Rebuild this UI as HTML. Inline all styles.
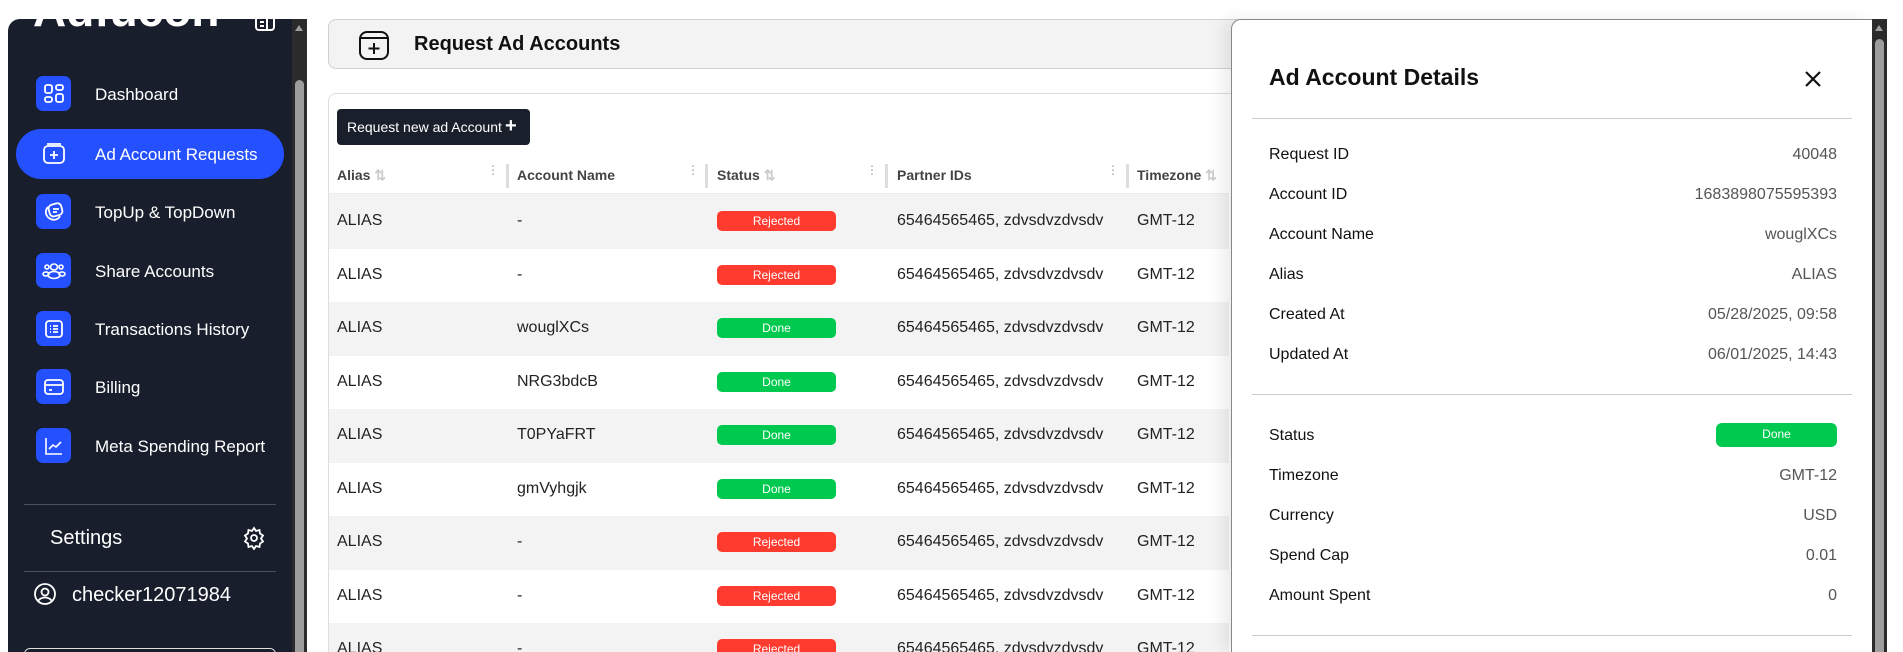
<!DOCTYPE html>
<html><head><meta charset="utf-8"><style>
*{box-sizing:border-box;margin:0;padding:0}
html,body{width:1903px;height:652px;overflow:hidden}
body{background:#fff;font-family:"Liberation Sans",Arial,sans-serif;position:relative}
.sb{position:absolute;left:8px;top:19px;width:284px;height:633px;background:#181e2c;border-radius:12px 0 0 0;overflow:hidden}
.sbs{position:absolute;left:292px;top:19px;width:15px;height:633px;background:#2b2b2b;overflow:hidden}
.sbs .th{position:absolute;left:3px;top:61px;width:9px;height:600px;background:#9d9d9d;border-radius:5px}
.sbs .ar{position:absolute;left:3px;top:6px;width:0;height:0;border-left:4.5px solid transparent;border-right:4.5px solid transparent;border-bottom:6px solid #9d9d9d}
.logo{position:absolute;left:25px;top:-36px;color:#fff;font-weight:900;font-size:46px;letter-spacing:0px}
.nav{position:absolute;left:0;width:284px;height:50px;color:#fff;font-size:17px}
.nav .ic{position:absolute;left:28px;top:7px;width:35px;height:35px;background:#2450ff;border-radius:7px;display:flex;align-items:center;justify-content:center}
.nav .t{position:absolute;left:87px;top:16px}
.nav.act{left:8px;width:268px;background:#2450ff;border-radius:25px}
.nav.act .ic{left:20px}.nav.act .t{left:79px}
.hr{position:absolute;left:16px;width:252px;height:1px;background:#4a505c}
.hdr{position:absolute;left:328px;top:19px;width:1000px;height:50px;background:#f3f3f3;border:1px solid #d0d0d0;border-radius:8px}
.hdr .t{position:absolute;left:85px;top:13px;font-size:20px;font-weight:bold;color:#111}
.card{position:absolute;left:328px;top:93px;width:1000px;height:570px;border:1px solid #ddd;border-radius:8px;background:#fff}
.btn{position:absolute;left:337px;top:109px;width:193px;height:36px;background:#1a1f2c;border-radius:4px;color:#fff;font-size:14px;padding:10px 0 0 10px}
.th2{position:absolute;top:167px;font-size:14px;font-weight:bold;color:#444}
.sep{position:absolute;top:164px;width:3px;height:24px;background:#ddd}
.dots{position:absolute;top:168px;width:3px;color:#999;font-size:12px;line-height:5px}
.row{position:absolute;left:329px;width:900px;height:53.5px;font-size:16px;color:#222}
.row.g{background:#f3f3f3}
.row span{position:absolute;top:17px}
.bd{position:absolute;top:16px;left:388px;width:119px;height:20px;border-radius:5px;color:#fff;font-size:12px;text-align:center;line-height:20px}
.rj{background:#ff3b30}.dn{background:#00c94f}
.hshadow{position:absolute;left:329px;top:193px;width:900px;height:3px;background:linear-gradient(#e8e8e8,#fff0)}
.dr{position:absolute;left:1231px;top:19px;width:641px;height:633px;background:#fff;border:1px solid #888;border-right:none;border-bottom:none;border-radius:10px 0 0 0;box-shadow:-8px 0 16px rgba(0,0,0,.08)}
.dr h2{position:absolute;left:37px;top:44px;font-size:23px;font-weight:bold;color:#111}
.dl{position:absolute;left:20px;width:600px;height:1px;background:#ccc}
.lb{position:absolute;left:37px;font-size:16px;color:#111}
.vl{position:absolute;right:35px;font-size:16px;color:#555;text-align:right}
.dsb{position:absolute;left:1872px;top:19px;width:15px;height:633px;background:#2b2b2b;overflow:hidden}
.dsb .th{position:absolute;left:3px;top:20px;width:9px;height:640px;background:#9d9d9d;border-radius:5px}
.dsb .ar{position:absolute;left:3px;top:6px;width:0;height:0;border-left:4.5px solid transparent;border-right:4.5px solid transparent;border-bottom:6px solid #9d9d9d}
</style></head><body>
<div class="sb">
 <div class="logo">Adfucon</div>
 <svg style="position:absolute;left:247px;top:-6px" width="20" height="20" viewBox="0 0 20 20" fill="none" stroke="#fff" stroke-width="2"><rect x="1" y="1" width="18" height="16" rx="3"/><path d="M12 1v16M5 9h4M5 13h4"/></svg>
 <div class="nav" style="top:50px"><div class="ic"><svg width="22" height="22" viewBox="0 0 22 22" fill="none" stroke="#fff" stroke-width="1.8"><rect x="2" y="2" width="7" height="8" rx="2"/><rect x="13" y="2" width="7" height="5" rx="2"/><rect x="2" y="14" width="7" height="5" rx="2"/><rect x="13" y="11" width="7" height="8" rx="2"/></svg></div><div class="t">Dashboard</div></div>
 <div class="nav act" style="top:110px"><div class="ic"><svg width="24" height="24" viewBox="0 0 24 24" fill="none" stroke="#fff" stroke-width="1.8"><rect x="2" y="4" width="20" height="17" rx="4"/><path d="M5 2h14M12 9v8M8 13h8"/></svg></div><div class="t">Ad Account Requests</div></div>
 <div class="nav" style="top:168px"><div class="ic"><svg width="22" height="22" viewBox="0 0 22 22" fill="none" stroke="#fff" stroke-width="1.8"><path d="M5 6c-3 3-3 8 1 11s9 2 11-2"/><rect x="6" y="3" width="13" height="12" rx="4" transform="rotate(-15 12 9)"/><path d="M10 8h6M10 11h4"/></svg></div><div class="t">TopUp &amp; TopDown</div></div>
 <div class="nav" style="top:227px"><div class="ic"><svg width="24" height="22" viewBox="0 0 24 22" fill="none" stroke="#fff" stroke-width="1.6"><ellipse cx="12" cy="7" rx="3.5" ry="3"/><ellipse cx="12" cy="15" rx="6" ry="3.5"/><circle cx="5" cy="7" r="2"/><circle cx="19" cy="7" r="2"/><ellipse cx="4" cy="14" rx="3" ry="2"/><ellipse cx="20" cy="14" rx="3" ry="2"/></svg></div><div class="t">Share Accounts</div></div>
 <div class="nav" style="top:285px"><div class="ic"><svg width="22" height="22" viewBox="0 0 22 22" fill="none" stroke="#fff" stroke-width="1.8"><rect x="3" y="3" width="16" height="16" rx="3"/><path d="M7 8h1M10 8h5M7 11h1M10 11h5M7 14h1M10 14h5"/></svg></div><div class="t">Transactions History</div></div>
 <div class="nav" style="top:343px"><div class="ic"><svg width="22" height="22" viewBox="0 0 22 22" fill="none" stroke="#fff" stroke-width="1.8"><rect x="2" y="4" width="18" height="14" rx="3"/><path d="M2 9h18M6 14h3"/></svg></div><div class="t">Billing</div></div>
 <div class="nav" style="top:402px"><div class="ic"><svg width="22" height="22" viewBox="0 0 22 22" fill="none" stroke="#fff" stroke-width="1.6"><path d="M3 3v16h16M6 14l4-4 3 2 5-5"/></svg></div><div class="t">Meta Spending Report</div></div>
 <div class="hr" style="top:485px"></div>
 <div style="position:absolute;left:42px;top:508px;color:#fff;font-size:20px">Settings</div>
 <svg style="position:absolute;left:234px;top:507px" width="24" height="24" viewBox="0 0 24 24" fill="none" stroke="#fff" stroke-width="1.8"><circle cx="12" cy="12" r="3"/><path d="M12 2l2 3 3.5-1 .5 3.5 3 2-2 3 2 3-3 2-.5 3.5-3.5-1-2 3-2-3-3.5 1-.5-3.5-3-2 2-3-2-3 3-2 .5-3.5 3.5 1z"/></svg>
 <div class="hr" style="top:552px"></div>
 <svg style="position:absolute;left:25px;top:563px" width="24" height="24" viewBox="0 0 24 24" fill="none" stroke="#fff" stroke-width="1.8"><circle cx="12" cy="12" r="10"/><circle cx="12" cy="10" r="3.5"/><path d="M5.5 18.5c3-4 10-4 13 0"/></svg>
 <div style="position:absolute;left:64px;top:565px;color:#fff;font-size:20px">checker12071984</div>
 <div style="position:absolute;left:16px;top:629px;width:252px;height:30px;border:1px solid #ddd;border-radius:6px"></div>
</div>
<div class="sbs"><div class="ar"></div><div class="th"></div></div>

<div class="hdr">
 <svg style="position:absolute;left:28px;top:9px" width="34" height="32" viewBox="0 0 34 32" fill="none" stroke="#111" stroke-width="2"><rect x="3" y="3" width="28" height="27" rx="7"/><path d="M4 9h26M17 14v11M11.5 19.5h11"/></svg>
 <div class="t">Request Ad Accounts</div>
</div>
<div class="card"></div>
<div class="btn">Request new ad Account <b style="font-size:20px;position:absolute;left:168px;top:6px">+</b></div>
<div class="th2" style="left:337px">Alias <span style="color:#ccc">⇅</span></div>
<div class="dots" style="left:487px">⋮</div><div class="sep" style="left:506px"></div>
<div class="th2" style="left:517px">Account Name</div>
<div class="dots" style="left:687px">⋮</div><div class="sep" style="left:705px"></div>
<div class="th2" style="left:717px">Status <span style="color:#ccc">⇅</span></div>
<div class="dots" style="left:866px">⋮</div><div class="sep" style="left:885px"></div>
<div class="th2" style="left:897px">Partner IDs</div>
<div class="dots" style="left:1107px">⋮</div><div class="sep" style="left:1126px"></div>
<div class="th2" style="left:1137px">Timezone <span style="color:#ccc">⇅</span></div>

<div class="row g" style="top:195px"><span style="left:8px">ALIAS</span><span style="left:188px">-</span><div class="bd rj">Rejected</div><span style="left:568px">65464565465, zdvsdvzdvsdv</span><span style="left:808px">GMT-12</span></div>
<div class="row" style="top:248.5px"><span style="left:8px">ALIAS</span><span style="left:188px">-</span><div class="bd rj">Rejected</div><span style="left:568px">65464565465, zdvsdvzdvsdv</span><span style="left:808px">GMT-12</span></div>
<div class="row g" style="top:302px"><span style="left:8px">ALIAS</span><span style="left:188px">wouglXCs</span><div class="bd dn">Done</div><span style="left:568px">65464565465, zdvsdvzdvsdv</span><span style="left:808px">GMT-12</span></div>
<div class="row" style="top:355.5px"><span style="left:8px">ALIAS</span><span style="left:188px">NRG3bdcB</span><div class="bd dn">Done</div><span style="left:568px">65464565465, zdvsdvzdvsdv</span><span style="left:808px">GMT-12</span></div>
<div class="row g" style="top:409px"><span style="left:8px">ALIAS</span><span style="left:188px">T0PYaFRT</span><div class="bd dn">Done</div><span style="left:568px">65464565465, zdvsdvzdvsdv</span><span style="left:808px">GMT-12</span></div>
<div class="row" style="top:462.5px"><span style="left:8px">ALIAS</span><span style="left:188px">gmVyhgjk</span><div class="bd dn">Done</div><span style="left:568px">65464565465, zdvsdvzdvsdv</span><span style="left:808px">GMT-12</span></div>
<div class="row g" style="top:516px"><span style="left:8px">ALIAS</span><span style="left:188px">-</span><div class="bd rj">Rejected</div><span style="left:568px">65464565465, zdvsdvzdvsdv</span><span style="left:808px">GMT-12</span></div>
<div class="row" style="top:569.5px"><span style="left:8px">ALIAS</span><span style="left:188px">-</span><div class="bd rj">Rejected</div><span style="left:568px">65464565465, zdvsdvzdvsdv</span><span style="left:808px">GMT-12</span></div>
<div class="row g" style="top:623px;height:29px;overflow:hidden"><span style="left:8px">ALIAS</span><span style="left:188px">-</span><div class="bd rj">Rejected</div><span style="left:568px">65464565465, zdvsdvzdvsdv</span><span style="left:808px">GMT-12</span></div>
<div class="hshadow"></div>

<div class="dr">
 <h2>Ad Account Details</h2>
 <svg style="position:absolute;left:571px;top:49px" width="20" height="20" viewBox="0 0 20 20" stroke="#111" stroke-width="2.2"><path d="M3 3l14 14M17 3L3 17"/></svg>
 <div class="dl" style="top:98px"></div>
 <div class="lb" style="top:126px">Request ID</div><div class="vl" style="top:126px">40048</div>
 <div class="lb" style="top:166px">Account ID</div><div class="vl" style="top:166px">1683898075595393</div>
 <div class="lb" style="top:206px">Account Name</div><div class="vl" style="top:206px">wouglXCs</div>
 <div class="lb" style="top:246px">Alias</div><div class="vl" style="top:246px">ALIAS</div>
 <div class="lb" style="top:286px">Created At</div><div class="vl" style="top:286px">05/28/2025, 09:58</div>
 <div class="lb" style="top:326px">Updated At</div><div class="vl" style="top:326px">06/01/2025, 14:43</div>
 <div class="dl" style="top:374px"></div>
 <div class="lb" style="top:407px">Status</div>
 <div style="position:absolute;left:484px;top:403px;width:121px;height:24px;background:#00c94f;border-radius:6px;color:#fff;font-size:12px;text-align:center;line-height:22px">Done</div>
 <div class="lb" style="top:447px">Timezone</div><div class="vl" style="top:447px">GMT-12</div>
 <div class="lb" style="top:487px">Currency</div><div class="vl" style="top:487px">USD</div>
 <div class="lb" style="top:527px">Spend Cap</div><div class="vl" style="top:527px">0.01</div>
 <div class="lb" style="top:567px">Amount Spent</div><div class="vl" style="top:567px">0</div>
 <div class="dl" style="top:615px"></div>
</div>
<div class="dsb"><div class="ar"></div><div class="th"></div></div>
</body></html>
